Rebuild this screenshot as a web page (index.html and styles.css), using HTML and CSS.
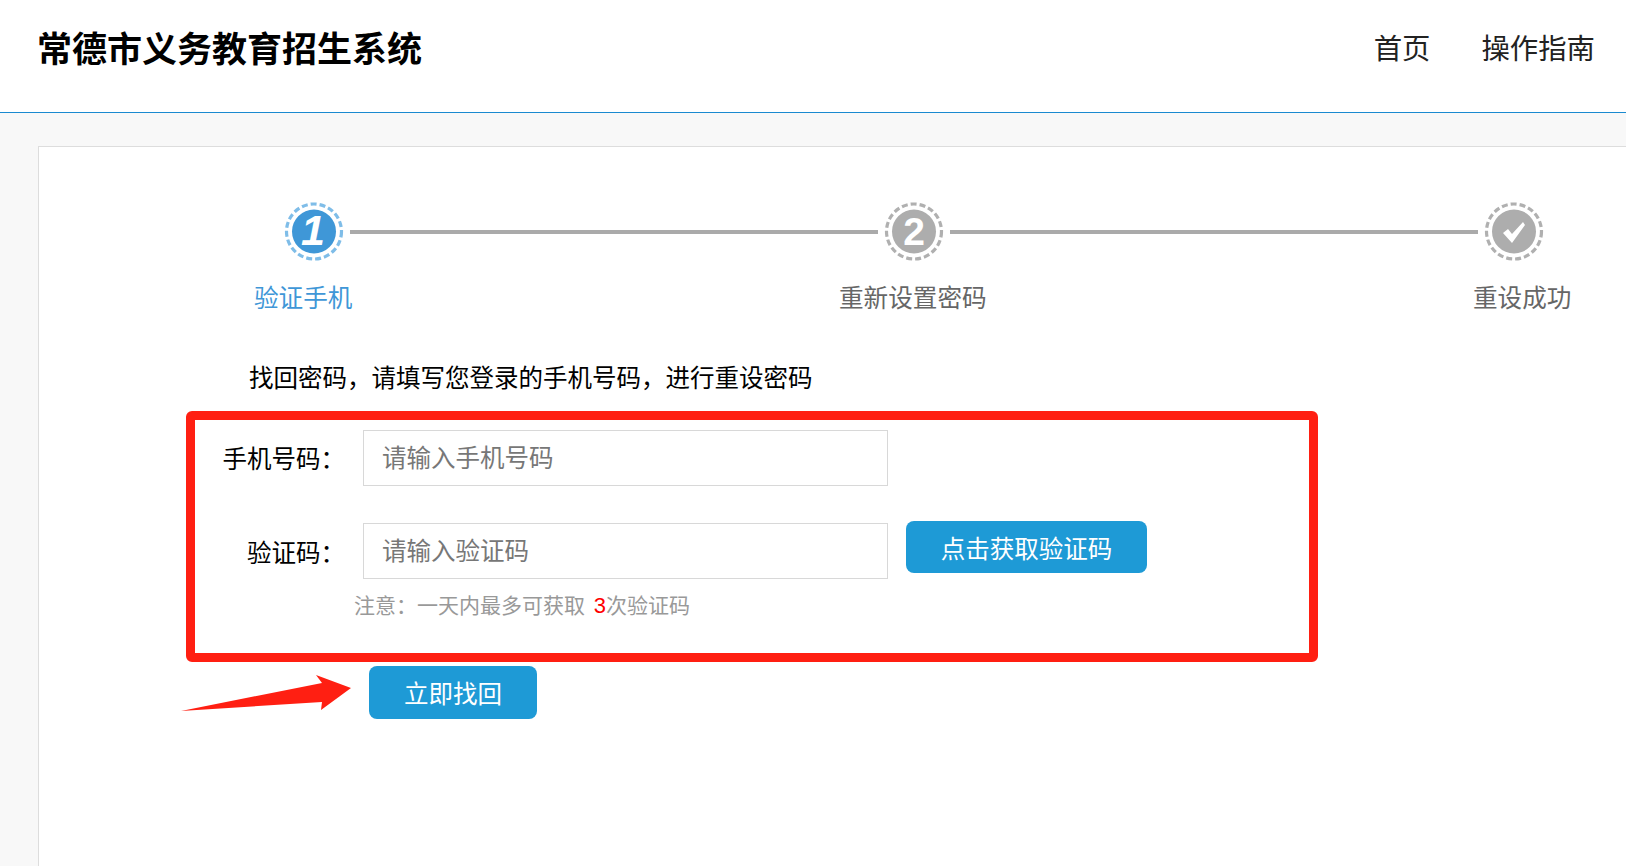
FILE: index.html
```html
<!DOCTYPE html>
<html lang="zh-CN">
<head>
<meta charset="utf-8">
<title>常德市义务教育招生系统</title>
<link rel="stylesheet" href="styles.css">
</head>
<body>
<header class="topbar">
  <h1 class="brand">常德市义务教育招生系统</h1>
  <nav class="nav">
    <a class="nav-link">首页</a>
    <a class="nav-link">操作指南</a>
  </nav>
</header>
<main class="page">
  <section class="card">
    <div class="track">
      <svg class="step-icon step-on" viewBox="0 0 60 60" width="60" height="60">
        <circle class="ring" cx="30" cy="29.5" r="27.5"/>
        <circle class="disc" cx="30" cy="29.5" r="22"/>
        <text class="num num-one" x="29" y="43">1</text>
      </svg>
      <div class="track-line"></div>
      <svg class="step-icon" viewBox="0 0 60 60" width="60" height="60">
        <circle class="ring" cx="30" cy="29.5" r="27.5"/>
        <circle class="disc" cx="30" cy="29.5" r="22"/>
        <text class="num" x="30" y="43">2</text>
      </svg>
      <div class="track-line"></div>
      <svg class="step-icon" viewBox="0 0 60 60" width="60" height="60">
        <circle class="ring" cx="30" cy="29.5" r="27.5"/>
        <circle class="disc" cx="30" cy="29.5" r="22"/>
        <path class="tick" d="M19 31 L24 27 L28 32 L39 20 L41 23 L28 41 Z"/>
      </svg>
    </div>
    <div class="labels">
      <span class="label label-on">验证手机</span>
      <span class="label">重新设置密码</span>
      <span class="label">重设成功</span>
    </div>
    <p class="intro">找回密码，请填写您登录的手机号码，进行重设密码</p>
    <form class="form">
      <div class="row">
        <label class="field-label">手机号码：</label>
        <input class="field" type="text" placeholder="请输入手机号码">
      </div>
      <div class="row row-code">
        <label class="field-label field-label-low">验证码：</label>
        <input class="field" type="text" placeholder="请输入验证码">
        <button class="btn btn-code" type="button">点击获取验证码</button>
      </div>
      <p class="note">注意：一天内最多可获取 <span class="count">3</span>次验证码</p>
      <button class="btn btn-submit" type="button">立即找回</button>
    </form>
    <div class="callout"></div>
    <svg class="arrow" viewBox="0 0 172 38" width="172" height="38">
      <path d="M0 37 L141 9 L135 1 L170 14 L140 36 L141 28 Z"/>
    </svg>
  </section>
</main>
</body>
</html>
```
FILE: styles.css
```css
* { box-sizing: border-box; }
html, body { height: 100%; }
body {
  margin: 0;
  background: #f8f8f8;
  overflow: hidden;
  font-family: "Noto Sans CJK SC", "Liberation Sans", sans-serif;
  color: #000;
}
.topbar {
  height: 113px;
  background: #fff;
  border-bottom: 1px solid #1a8ad0;
  display: flex;
  justify-content: space-between;
  align-items: center;
  padding: 0 31px 18px 37px;
}
.brand {
  margin: 0;
  font-size: 35px;
  line-height: 50px;
  font-weight: 700;
  color: #000;
}
.nav { display: flex; gap: 51px; }
.nav-link { font-size: 28.4px; line-height: 40px; color: #222; }
.page { padding: 33px 0 0 38px; }
.card {
  position: relative;
  height: 720px;
  background: #fff;
  border: 1px solid #ddd;
  border-right: 0;
  border-bottom: 0;
}
.track {
  display: flex;
  align-items: center;
  gap: 6px;
  padding: 55px 0 0 245px;
}
.step-icon { flex: none; display: block; }
.ring {
  fill: none;
  stroke: #b0b0b0;
  stroke-width: 3.2;
  stroke-dasharray: 6 3;
}
.disc { fill: #adadad; }
.step-on .ring { stroke: #7fbde8; }
.step-on .disc { fill: #3f97d7; }
.num {
  fill: #fff;
  font-family: "Liberation Sans", sans-serif;
  font-size: 39px;
  font-weight: 700;
  text-anchor: middle;
}
.num-one { font-style: italic; font-size: 43px; }
.tick { fill: #fff; }
.track-line { flex: none; width: 528px; height: 4px; background: #aaa; }
.labels {
  display: grid;
  grid-template-columns: 585px 634px auto;
  padding-left: 215px;
  margin-top: 17px;
}
.label { font-size: 24.6px; line-height: 34px; color: #666; }
.label-on { color: #3f97d7; }
.intro {
  margin: 47px 0 0 210px;
  font-size: 24.5px;
  line-height: 34px;
  color: #000;
}
.form { margin: 36px 0 0; }
.row { display: flex; align-items: flex-start; }
.row-code { margin-top: 37px; }
.field-label {
  width: 306px;
  margin-right: 18px;
  text-align: right;
  font-size: 24.5px;
  line-height: 56px;
  color: #000;
}
.field-label-low { padding-top: 1px; }
.field {
  width: 525px;
  height: 56px;
  padding: 0 18px 4px;
  border: 1px solid #d8d8d8;
  background: #fff;
  font: inherit;
  font-size: 24.5px;
  outline: none;
}
.field::placeholder { color: #777; opacity: 1; }
.btn {
  display: block;
  border: 0;
  border-radius: 8px;
  background: #1e9ad6;
  color: #fff;
  font: inherit;
  font-size: 24.5px;
  padding: 0;
}
.btn-code { width: 241px; height: 52px; margin: -2px 0 0 18px; }
.note {
  margin: 10px 0 0 315px;
  font-size: 21px;
  line-height: 28px;
  word-spacing: 4px;
  color: #999;
}
.count { color: #f00; font-family: "Liberation Sans", sans-serif; font-size: 22px; }
.btn-submit { width: 168px; height: 53px; margin: 46px 0 0 330px; }
.callout {
  position: absolute;
  left: 147px;
  top: 264px;
  width: 1132px;
  height: 251px;
  border: 9px solid #ff1f12;
  border-radius: 6px;
}
.arrow {
  position: absolute;
  left: 142px;
  top: 527px;
  display: block;
}
.arrow path { fill: #ff1f12; }
```
